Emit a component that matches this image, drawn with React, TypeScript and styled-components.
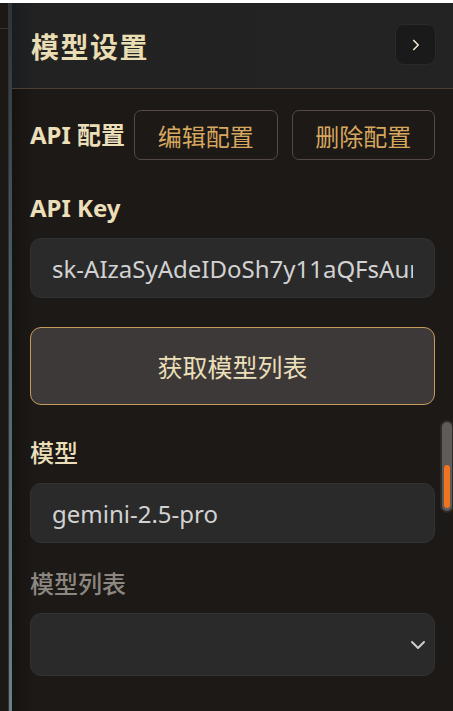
import React from 'react';
import styled, { createGlobalStyle } from 'styled-components';
import { ChevronRight, ChevronDown } from 'lucide-react';

const GlobalStyle = createGlobalStyle`
  html, body {
    margin: 0;
    padding: 0;
    background: #1d1916;
  }
  * {
    box-sizing: border-box;
  }
  body {
    font-family: "Noto Sans", "Noto Sans CJK SC", sans-serif;
  }
`;

const Page = styled.div`
  height: 711px;
  border-top: 3px solid #ffffff;
  display: flex;
  overflow: hidden;
  position: relative;
`;

const LeftEdge = styled.div`
  width: 9px;
  border-right: 1px solid #3b3129;
  background: #1c1815;
  display: flex;
  flex-direction: column;
  .top {
    height: 26px;
    border-bottom: 1px solid #3b3129;
  }
`;

const BlueStrip = styled.div`
  width: 3px;
  background: linear-gradient(to bottom, #2c3438 0%, #45606c 40%, #66808f 100%);
`;

const Panel = styled.div`
  flex: 1;
  display: flex;
  flex-direction: column;
  background: linear-gradient(to right, #15120f 0px, #1d1916 22px, #1d1916 100%);
`;

const Header = styled.div`
  height: 86px;
  padding: 0 17px 0 19px;
  display: flex;
  align-items: center;
  justify-content: space-between;
  background: linear-gradient(to right, #1a1d20 0px, #222222 25px, #232323 100%);
  border-bottom: 1px solid #4b3f35;
`;

const Title = styled.h1`
  margin: 0;
  font-family: "Noto Sans CJK SC", serif;
  font-size: 28px;
  font-weight: 700;
  letter-spacing: 1.5px;
  color: #e9ddb4;
`;

const IconButton = styled.button`
  width: 41px;
  height: 41px;
  margin-top: -2px;
  border-radius: 9px;
  border: 1px solid #2a2a2a;
  background: #1a1a1a;
  color: #eee6cc;
  display: flex;
  align-items: center;
  justify-content: center;
  padding: 0;
`;

const Body = styled.div`
  padding: 21px 18px 0;
  display: flex;
  flex-direction: column;
`;

const ConfigRow = styled.div`
  display: flex;
  align-items: center;
  gap: 14px;
  height: 50px;
`;

const Label = styled.div<{ $muted?: boolean; $bold?: boolean }>`
  font-size: 24px;
  line-height: 32px;
  font-weight: ${(p) => (p.$bold ? 700 : 500)};
  color: ${(p) => (p.$muted ? '#8c8781' : '#eadfb8')};
  white-space: nowrap;
`;

const ConfigLabel = styled(Label)`
  margin-right: -5px;
`;

const OutlineButton = styled.button`
  flex: 1;
  height: 50px;
  border: 1px solid #554a43;
  border-radius: 7px;
  background: transparent;
  color: #d6a75e;
  font-family: "Noto Sans CJK SC", sans-serif;
  font-size: 24px;
  padding: 0;
`;

const FieldLabel = styled(Label)`
  margin-top: ${(p) => (p.$muted ? 25 : 32)}px;
  margin-bottom: ${(p) => (p.$muted ? 13 : 14)}px;
`;

const TextInput = styled.input`
  height: 60px;
  width: 100%;
  border: 1px solid #323232;
  border-radius: 11px;
  background: #2a2a2a;
  padding: 0 21px;
  font-family: "Noto Sans", "Noto Sans CJK SC", sans-serif;
  font-size: 24px;
  color: #d2d2d2;
  outline: none;
`;

const SelectField = styled.div`
  height: 63px;
  border: 1px solid #323232;
  border-radius: 11px;
  background: #2a2a2a;
  padding: 0 4px 0 21px;
  display: flex;
  align-items: center;
  justify-content: flex-end;
  color: #cfcfcf;
`;

const FetchButton = styled.button`
  margin-top: 29px;
  height: 78px;
  border: 1px solid #c59b5c;
  border-radius: 11px;
  background: #3d3938;
  color: #eadfb8;
  font-family: "Noto Sans CJK SC", sans-serif;
  font-size: 25px;
  padding: 0;
`;

const ScrollTrack = styled.div`
  position: absolute;
  right: 1px;
  top: 419px;
  width: 10px;
  height: 89px;
  border-radius: 5px;
  background: #5e5b59;
  box-shadow: 0 0 0 2px #2d2a28;
  padding: 43px 2px 3px;
  div {
    height: 100%;
    border-radius: 3px;
    background: #f0731f;
  }
`;

export default function App() {
  return (
    <>
      <GlobalStyle />
      <Page>
        <LeftEdge>
          <div className="top" />
        </LeftEdge>
        <BlueStrip />
        <Panel>
          <Header>
            <Title>模型设置</Title>
            <IconButton aria-label="收起">
              <ChevronRight size={18} strokeWidth={2.2} />
            </IconButton>
          </Header>
          <Body>
            <ConfigRow>
              <ConfigLabel $bold>API 配置</ConfigLabel>
              <OutlineButton>编辑配置</OutlineButton>
              <OutlineButton>删除配置</OutlineButton>
            </ConfigRow>
            <FieldLabel $bold>API Key</FieldLabel>
            <TextInput readOnly value="sk-AIzaSyAdeIDoSh7y11aQFsAur" />
            <FetchButton>获取模型列表</FetchButton>
            <FieldLabel>模型</FieldLabel>
            <TextInput readOnly value="gemini-2.5-pro" />
            <FieldLabel $muted>模型列表</FieldLabel>
            <SelectField>
              <ChevronDown size={24} strokeWidth={2} />
            </SelectField>
          </Body>
        </Panel>
        <ScrollTrack>
          <div />
        </ScrollTrack>
      </Page>
    </>
  );
}
